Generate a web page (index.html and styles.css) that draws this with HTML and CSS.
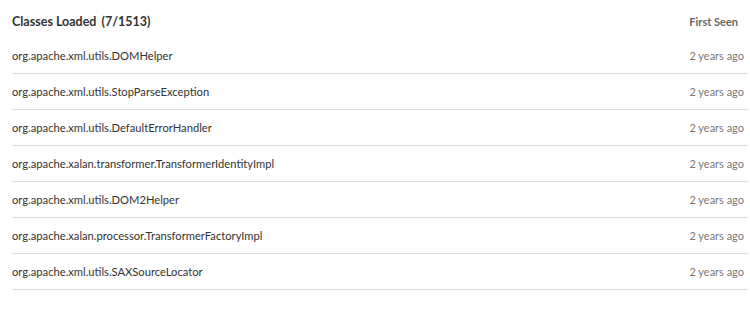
FILE: index.html
```html
<!DOCTYPE html>
<html>
<head>
<meta charset="utf-8">
<link rel="stylesheet" href="styles.css">
</head>
<body>
<div class="panel">
  <div class="head">
    <div class="title">Classes Loaded <span class="count">(7/1513)</span></div>
    <div class="col">First Seen</div>
  </div>
  <div class="row"><span class="name">org.apache.xml.utils.DOMHelper</span><span class="when">2 years ago</span></div>
  <div class="row"><span class="name">org.apache.xml.utils.StopParseException</span><span class="when">2 years ago</span></div>
  <div class="row"><span class="name">org.apache.xml.utils.DefaultErrorHandler</span><span class="when">2 years ago</span></div>
  <div class="row"><span class="name">org.apache.xalan.transformer.TransformerIdentityImpl</span><span class="when">2 years ago</span></div>
  <div class="row"><span class="name">org.apache.xml.utils.DOM2Helper</span><span class="when">2 years ago</span></div>
  <div class="row"><span class="name">org.apache.xalan.processor.TransformerFactoryImpl</span><span class="when">2 years ago</span></div>
  <div class="row"><span class="name">org.apache.xml.utils.SAXSourceLocator</span><span class="when">2 years ago</span></div>
</div>
</body>
</html>
```
FILE: styles.css
```css
html, body {
  margin: 0;
  padding: 0;
  background: #fff;
}
body {
  font-family: Lato, "Open Sans", sans-serif;
}
.panel {
  padding-left: 12px;
  width: 736px;
}
.head {
  display: flex;
  justify-content: space-between;
  align-items: center;
  box-sizing: border-box;
  height: 38px;
  padding-top: 4px;
  padding-right: 10px;
}
.title {
  font-size: 12.5px;
  font-weight: 700;
  color: #333;
}
.count {
  margin-left: 2px;
}
.col {
  font-size: 11px;
  font-weight: 700;
  color: #666;
}
.row {
  display: flex;
  justify-content: space-between;
  align-items: center;
  height: 35px;
  border-bottom: 1px solid #ddd;
  padding-right: 4px;
}
.name {
  font-size: 11.2px;
  color: #333;
}
.when {
  font-size: 11px;
  color: #777;
}
```
